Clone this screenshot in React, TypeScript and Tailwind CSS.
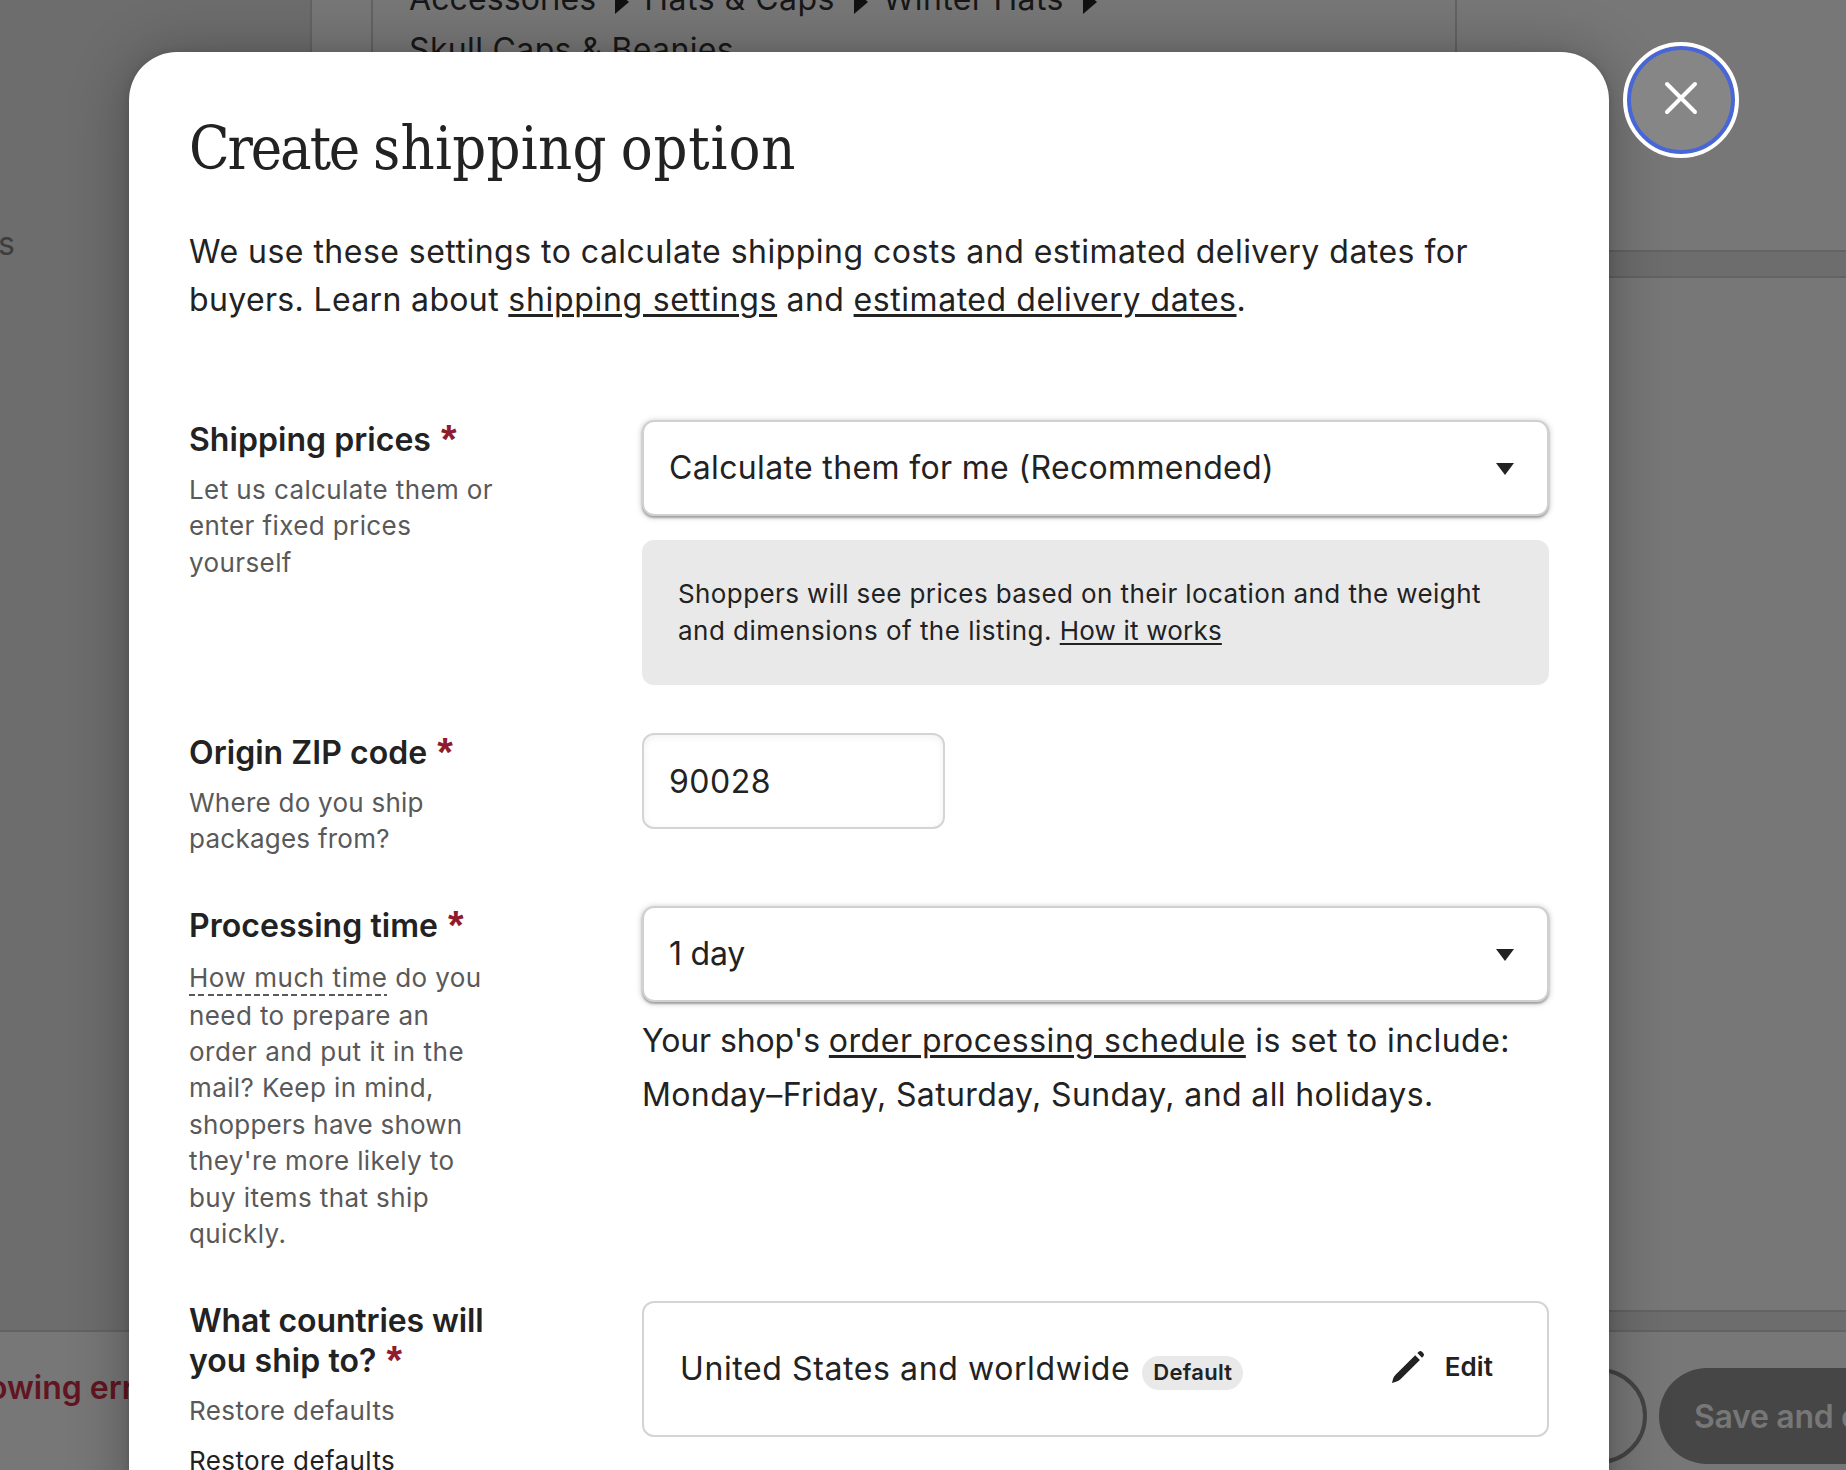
import React from "react";

function Star() {
  return (
    <span className="relative top-0.5 ml-[10px] inline-block h-5 align-baseline font-['Liberation_Sans',sans-serif] text-[40px] leading-5 font-bold text-[#8f1b2d]">
      *
    </span>
  );
}

function Caret() {
  return (
    <svg className="mt-0.5 h-3 w-[18px]" viewBox="0 0 18 12" fill="#222222">
      <path d="M0 0h18L9 12z" />
    </svg>
  );
}

function Crumb() {
  return (
    <svg className="relative top-px mr-[15px] ml-[19px] inline-block h-6 w-3.5" viewBox="0 0 14 24" fill="#111111">
      <path d="M0 0l14 12L0 24z" />
    </svg>
  );
}

function Select({ value, spacing }: { value: string; spacing: string }) {
  return (
    <div className="flex h-24 items-center justify-between rounded-xl border-2 border-[#d0d0d0] bg-white pr-[33px] pl-[25px] shadow-[0_2px_2px_rgba(0,0,0,0.26),0_1px_6px_rgba(0,0,0,0.26)]">
      <span className={`whitespace-nowrap ${spacing}`}>{value}</span>
      <Caret />
    </div>
  );
}

function Label({ children }: { children: React.ReactNode }) {
  return <h2 className="leading-[40px] font-semibold tracking-[0.05px] whitespace-nowrap">{children}</h2>;
}

const help = "text-[26px] leading-[36.4px] tracking-[0.4px] whitespace-nowrap";
const bigLink = "underline decoration-[3px] underline-offset-[2.5px]";

/* Listing form that sits dimmed behind the dialog. */
function ListingPage() {
  return (
    <div className="flex h-full flex-col bg-[#6d6d6d] text-[#171717]">
      <div className="flex h-[1330px]">
        <aside className="w-[310px] pt-[224px]">
          <span className="-ml-[2px] block leading-[40px] text-[#3d3d3d]">s</span>
        </aside>
        <div className="flex flex-1 flex-col gap-6 border-[#636363]">
          <div className="flex h-[252px] border-b-2 border-l-2 border-[#636363] bg-[#777777]">
            <div className="-mt-10 ml-[59px] w-[1086px] border-x-2 border-[#636363] pt-[12.5px] pl-9 leading-[51px] tracking-[0.35px] whitespace-nowrap">
              <div>
                <span className="tracking-[0.1px]">Accessories</span>
                <Crumb />
                <span className="tracking-[0.5px]">Hats &amp; Caps</span>
                <Crumb />
                Winter Hats
                <Crumb />
              </div>
              <div>Skull Caps &amp; Beanies</div>
            </div>
          </div>
          <div className="h-[1036px] border-y-2 border-l-2 border-[#636363] bg-[#777777]" />
        </div>
      </div>
      <footer className="flex h-[140px] items-start justify-between border-t-2 border-[#636363] bg-[#777777] pt-9">
        <p className="-ml-[60px] w-[260px] overflow-hidden leading-[40px] font-semibold whitespace-nowrap text-[#611521]">
          following errors
        </p>
        <div className="-mr-[180px] flex gap-3">
          <button className="h-24 w-[200px] rounded-full border-4 border-[#444444]" />
          <button className="h-24 w-[367px] rounded-full bg-[#464646] pt-0.5 pl-[35px] text-left font-semibold tracking-[-0.3px] whitespace-nowrap text-[#777777]">
            Save and continue
          </button>
        </div>
      </footer>
    </div>
  );
}

export default function App() {
  return (
    <div className="relative h-[1470px] w-[1846px] overflow-hidden font-['Inter',sans-serif] text-[32px] leading-[48px] text-[#222222]">
      <ListingPage />

      <div className="absolute top-[52px] left-[129px] h-[1600px] w-[1480px] rounded-[48px] bg-white px-[60px] pt-[60px] shadow-[0_4px_60px_rgba(0,0,0,0.3),0_2px_10px_rgba(0,0,0,0.15)]">
        <h1 className="font-['DejaVu_Serif_Condensed','DejaVu_Serif',serif] text-[59px] leading-[73px] whitespace-nowrap">
          <span className="tracking-[-2.1px]">Create </span>
          <span className="tracking-[0.3px]">shipping</span>
          <span className="tracking-[-3px]"> </span>
          <span className="tracking-[0.9px]">option</span>
        </h1>
        <p className="mt-[43px] whitespace-nowrap">
          <span className="tracking-[0.48px]">
            We use these settings to calculate shipping costs and estimated delivery dates for
          </span>
          <br />
          <span className="tracking-[0.35px]">buyers. Learn about </span>
          <a className={`${bigLink} tracking-[0.7px]`}>shipping settings</a>
          <span className="tracking-[0.4px]"> and </span>
          <a className={`${bigLink} tracking-[0.55px]`}>estimated delivery dates</a>.
        </p>

        <section className="mt-24 grid grid-cols-[453px_907px]">
          <div>
            <Label>
              Shipping prices
              <Star />
            </Label>
            <p className={`${help} mt-3 text-[#595959]`}>
              Let us calculate them or
              <br />
              enter fixed prices
              <br />
              yourself
            </p>
          </div>
          <div>
            <Select value="Calculate them for me (Recommended)" spacing="tracking-[0.35px]" />
            <div className="mt-6 h-[145px] rounded-xl bg-[#e9e9e9] px-9 pt-9 text-[26px] leading-[36.8px] tracking-[0.4px] whitespace-nowrap">
              Shoppers will see prices based on their location and the weight
              <br />
              <span className="tracking-[0.48px]">and dimensions of the listing. </span>
              <a className="tracking-[0.2px] underline decoration-2 underline-offset-[3px]">How it works</a>
            </div>
          </div>
        </section>

        <section className="mt-12 grid h-[125px] grid-cols-[453px_907px]">
          <div>
            <Label>
              Origin ZIP code
              <Star />
            </Label>
            <p className={`${help} mt-3 text-[#595959]`}>
              <span className="tracking-[0.25px]">
                Where do you ship
                <br />
                packages from?
              </span>
            </p>
          </div>
          <div className="flex h-24 w-[303px] items-center rounded-xl border-2 border-[#d4d4d4] pt-px pl-[25px] tracking-[0.5px] shadow-[inset_0_2px_8px_rgba(0,0,0,0.06)]">
            90028
          </div>
        </section>

        <section className="mt-12 grid h-[347px] grid-cols-[453px_907px]">
          <div>
            <Label>
              Processing time
              <Star />
            </Label>
            <p className={`${help} mt-3.5 text-[#595959]`}>
              <span className="mb-[1.5px] inline-block bg-[repeating-linear-gradient(to_right,#595959_0_6px,transparent_6px_9.3px)] bg-[length:100%_2px] bg-bottom bg-no-repeat pb-1 leading-[28px] tracking-[0.54px]">
                How much time
              </span>{" "}
              do you
              <br />
              need to prepare an
              <br />
              <span className="tracking-[0.5px]">order and put it in the</span>
              <br />
              mail? Keep in mind,
              <br />
              <span className="tracking-[0.2px]">shoppers have shown</span>
              <br />
              they're more likely to
              <br />
              buy items that ship
              <br />
              quickly.
            </p>
          </div>
          <div>
            <Select value="1 day" spacing="tracking-[-0.2px]" />
            <p className="mt-3 leading-[54.4px] tracking-[0.38px] whitespace-nowrap">
              <span className="tracking-[-0.1px]">Your shop's </span>
              <a className={`${bigLink} tracking-[0.52px]`}>order processing schedule</a>
              <span className="tracking-[0.48px]"> is set to include:</span>
              <br />
              Monday–Friday, Saturday, Sunday, and all holidays.
            </p>
          </div>
        </section>

        <section className="mt-12 grid grid-cols-[453px_907px] items-start">
          <div>
            <Label>
              <span className="tracking-[-0.1px]">What countries will</span>
              <br />
              you ship to?
              <Star />
            </Label>
            <p className={`${help} mt-3 text-[#595959]`}>Restore defaults</p>
            <p className={`${help} mt-3.5`}>Restore defaults</p>
          </div>
          <div className="flex h-[136px] items-center rounded-xl border-2 border-[#d4d4d4] pr-[54px] pl-9 whitespace-nowrap">
            <span className="tracking-[0.6px]">United States and worldwide</span>
            <span className="mt-2 ml-3 flex h-[34px] items-center rounded-full bg-[#e9e9e9] px-[11px] pb-0.5 text-[22px] leading-none font-semibold tracking-[0.3px]">
              Default
            </span>
            <span className="ml-auto flex items-center gap-5 pb-1 text-[26px] leading-none font-semibold tracking-[0.1px]">
              <svg className="h-[34px] w-[34px]" viewBox="0 0 34 34" fill="#222222">
                <path d="M24.2 5.2L28.9 9.9L9.5 29.3Q7.6 31.2 5 31.8L1 33L2 29Q2.8 26.6 4.8 24.6Z" />
                <path d="M26.4 3L28 1.5Q29.6 0.4 31 1.8L32.4 3.2Q33.6 4.7 32.6 6L31 7.7Z" />
              </svg>
              Edit
            </span>
          </div>
        </section>
      </div>

      <button className="absolute top-[42px] left-[1623px] flex size-[116px] items-center justify-center rounded-full border-4 border-white bg-[#868686] pb-1 shadow-[inset_0_0_0_4px_#4766d8]">
        <svg className="h-9 w-9" viewBox="0 0 36 36" fill="none" stroke="#ffffff" strokeWidth="4" strokeLinecap="round">
          <path d="M4 4L32 32M32 4L4 32" />
        </svg>
      </button>
    </div>
  );
}
